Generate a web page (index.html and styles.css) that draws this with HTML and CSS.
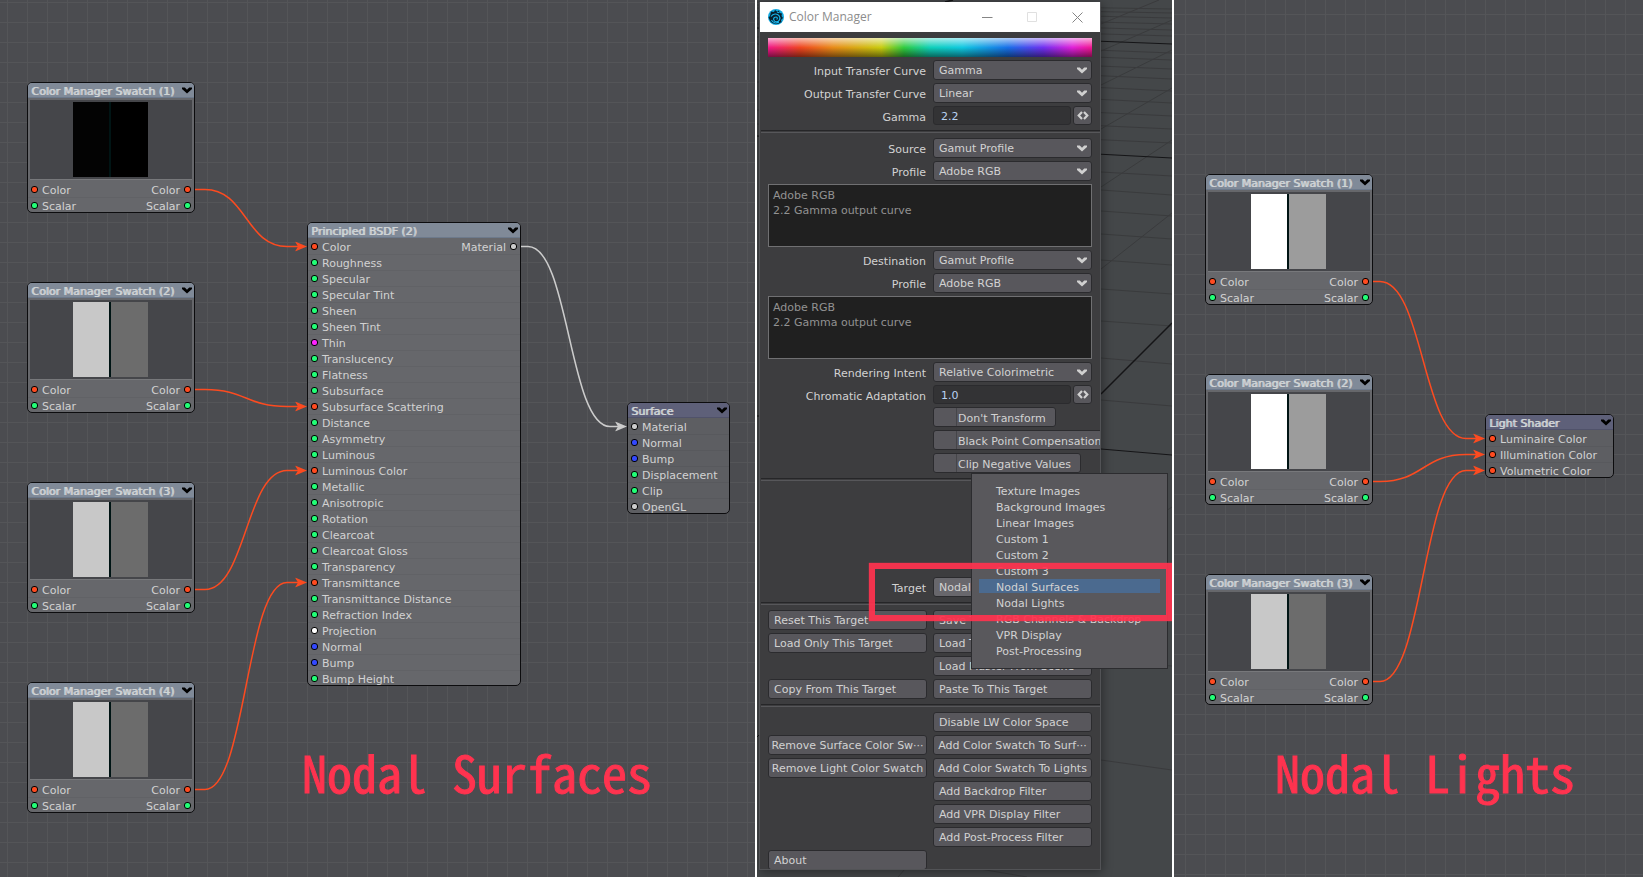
FILE: index.html
```
<!DOCTYPE html>
<html lang="en">
<head>
    <meta charset="UTF-8">
    <meta name="viewport" content="width=device-width, initial-scale=1.0">
    <title>Color Manager</title>
    <link rel="stylesheet" href="styles.css">
</head>
<body>

    <!-- Shared icons -->
    <svg class="defs" aria-hidden="true">
        <symbol id="chevron" viewBox="0 0 10 7">
            <path d="M0 0.5h2.8L5 2.7 7.200 0.5H10V2L5 6.500 0 2z"/>
        </symbol>
        <symbol id="spin" viewBox="0 0 12 9">
            <path d="M5 1L1.700 4.500 5 8M7 1l3.300 3.500L7 8" fill="none" stroke="currentColor" stroke-width="2.2"/>
        </symbol>
        <symbol id="arrow" viewBox="0 0 12 10">
            <path d="M0 0L12 5 0 10 3 5z"/>
        </symbol>
    </svg>

    <main class="boards">

        <section class="board board-surfaces">
            <svg class="wires">
                <g class="wire">
                    <path d="M195 189.500H205C246 189.500 246 246.500 287 246.500H300"/>
                    <path d="M195 389.500H205C246 389.500 246 406.500 287 406.500H300"/>
                    <path d="M195 589.500H205C246 589.500 246 470.500 287 470.500H300"/>
                    <path d="M195 789.500H205C246 789.500 246 582.500 287 582.500H300"/>
                </g>
                <g class="wire-head">
                    <use href="#arrow" x="295" y="241.500" width="12" height="10"/>
                    <use href="#arrow" x="295" y="401.500" width="12" height="10"/>
                    <use href="#arrow" x="295" y="465.500" width="12" height="10"/>
                    <use href="#arrow" x="295" y="577.500" width="12" height="10"/>
                </g>
                <path class="wire wire-material" d="M521 246.500H528C569 246.500 569 426.500 610 426.500H620"/>
                <use class="wire-head-material" href="#arrow" x="615" y="421.500" width="12" height="10"/>
            </svg>

            <article class="node swatch s1">
                <h2>Color Manager Swatch (1)</h2><svg class="fold"><use href="#chevron"/></svg>
                <div class="preview dark"><i></i><b></b></div>
                <ul>
                    <li><span class="port red"></span>Color<span class="out">Color<span class="port red"></span></span></li>
                    <li><span class="port green"></span>Scalar<span class="out">Scalar<span class="port green"></span></span></li>
                </ul>
            </article>

            <article class="node swatch s2">
                <h2>Color Manager Swatch (2)</h2><svg class="fold"><use href="#chevron"/></svg>
                <div class="preview"><i></i><b></b></div>
                <ul>
                    <li><span class="port red"></span>Color<span class="out">Color<span class="port red"></span></span></li>
                    <li><span class="port green"></span>Scalar<span class="out">Scalar<span class="port green"></span></span></li>
                </ul>
            </article>

            <article class="node swatch s3">
                <h2>Color Manager Swatch (3)</h2><svg class="fold"><use href="#chevron"/></svg>
                <div class="preview"><i></i><b></b></div>
                <ul>
                    <li><span class="port red"></span>Color<span class="out">Color<span class="port red"></span></span></li>
                    <li><span class="port green"></span>Scalar<span class="out">Scalar<span class="port green"></span></span></li>
                </ul>
            </article>

            <article class="node swatch s4">
                <h2>Color Manager Swatch (4)</h2><svg class="fold"><use href="#chevron"/></svg>
                <div class="preview"><i></i><b></b></div>
                <ul>
                    <li><span class="port red"></span>Color<span class="out">Color<span class="port red"></span></span></li>
                    <li><span class="port green"></span>Scalar<span class="out">Scalar<span class="port green"></span></span></li>
                </ul>
            </article>

            <article class="node bsdf">
                <h2>Principled BSDF (2)</h2><svg class="fold"><use href="#chevron"/></svg>
                <ul>
                    <li><span class="port red"></span>Color<span class="out">Material<span class="port gray"></span></span></li>
                    <li><span class="port green"></span>Roughness</li>
                    <li><span class="port green"></span>Specular</li>
                    <li><span class="port green"></span>Specular Tint</li>
                    <li><span class="port green"></span>Sheen</li>
                    <li><span class="port green"></span>Sheen Tint</li>
                    <li><span class="port magenta"></span>Thin</li>
                    <li><span class="port green"></span>Translucency</li>
                    <li><span class="port green"></span>Flatness</li>
                    <li><span class="port green"></span>Subsurface</li>
                    <li><span class="port red"></span>Subsurface Scattering</li>
                    <li><span class="port green"></span>Distance</li>
                    <li><span class="port green"></span>Asymmetry</li>
                    <li><span class="port green"></span>Luminous</li>
                    <li><span class="port red"></span>Luminous Color</li>
                    <li><span class="port green"></span>Metallic</li>
                    <li><span class="port green"></span>Anisotropic</li>
                    <li><span class="port green"></span>Rotation</li>
                    <li><span class="port green"></span>Clearcoat</li>
                    <li><span class="port green"></span>Clearcoat Gloss</li>
                    <li><span class="port green"></span>Transparency</li>
                    <li><span class="port red"></span>Transmittance</li>
                    <li><span class="port green"></span>Transmittance Distance</li>
                    <li><span class="port green"></span>Refraction Index</li>
                    <li><span class="port white"></span>Projection</li>
                    <li><span class="port blue"></span>Normal</li>
                    <li><span class="port blue"></span>Bump</li>
                    <li><span class="port green"></span>Bump Height</li>
                </ul>
            </article>

            <article class="node root surface">
                <h2>Surface</h2><svg class="fold"><use href="#chevron"/></svg>
                <ul>
                    <li><span class="port gray"></span>Material</li>
                    <li><span class="port blue"></span>Normal</li>
                    <li><span class="port blue"></span>Bump</li>
                    <li><span class="port green"></span>Displacement</li>
                    <li><span class="port green"></span>Clip</li>
                    <li><span class="port gray"></span>OpenGL</li>
                </ul>
            </article>

            <h1 class="caption">Nodal Surfaces</h1>
        </section>

        <section class="viewport">
            <!-- Perspective floor grid -->
            <svg class="floor">
                <g class="floor-minor">
                    <path d="M0 2L415 9M0 5L415 13M0 8L415 18M0 13L415 24M0 18L415 30M0 24L415 36M0 37L415 53M0 44L415 60M0 52L415 69M0 60L415 79M0 71L415 91M0 82L415 103M0 96L415 116M0 110L415 129M0 124L415 143"/>
                    <path d="M344 172L415 176M344 190L415 195M344 211L415 216M344 234L415 239M344 260L415 265M344 289L415 294M344 321L415 326M344 358L415 364M344 400L415 406M344 660L415 666M344 760L415 770"/>
                    <path d="M344 24L402 0M344 51L415 20M344 85L415 50M344 129L415 88M344 187L415 140M344 269L415 213M344 554L415 507M141 877L148 869M223 869L270 877"/>
                </g>
                <path class="floor-major" d="M0 28L415 44M0 136L415 158M344 449L415 455M0 416L3 416M0 737L3 734"/>
                <path class="floor-axis" d="M344 394L415 323M188 2L196 0"/>
            </svg>

            <section class="window">
                <header class="titlebar">
                    <svg class="logo" viewBox="0 0 16 16">
                        <circle cx="8" cy="8" r="8" fill="#12a8e0"/>
                        <path d="M3 2.500l3 .5 1-2 2 1.500 2-1 .5 2.500 2.500.5-.5 2.500 1.500 2-2 2 .5 2-2.500 1.500C8 16 3 14.500 2 11.500L.5 8.500 2 7z" fill="#07202e"/>
                        <path d="M3 7.500c2-3 6-3.500 8-.8s.3 6-2.500 6-4-3.500-1.500-4.500 3 1.800 1.500 2M3.500 11c1 2.500 5 4 7.500 2M9 3l2 .8" fill="none" stroke="#19b4ec" stroke-width="1.100"/>
                    </svg>
                    <span class="title">Color Manager</span>
                    <button class="win-btn" aria-label="Minimize"><svg viewBox="0 0 11 11"><path d="M0 5.500h10.500"/></svg></button>
                    <button class="win-btn" aria-label="Maximize" disabled><svg viewBox="0 0 11 11"><path d="M.5.5h9v9h-9z"/></svg></button>
                    <button class="win-btn" aria-label="Close"><svg viewBox="0 0 11 11"><path d="M.5.5l10 10M10.500.5l-10 10"/></svg></button>
                </header>

                <form class="panel">
                    <div class="spectrum"></div>

                    <label for="input-curve">Input Transfer Curve</label>
                    <div class="drop"><select id="input-curve"><option>Gamma</option></select><svg><use href="#chevron"/></svg></div>
                    <label for="output-curve">Output Transfer Curve</label>
                    <div class="drop"><select id="output-curve"><option>Linear</option></select><svg><use href="#chevron"/></svg></div>
                    <label for="gamma">Gamma</label>
                    <div class="number"><input id="gamma" type="text" value="2.2"><button type="button" aria-label="Adjust gamma"><svg><use href="#spin"/></svg></button></div>

                    <hr>

                    <label for="source">Source</label>
                    <div class="drop"><select id="source"><option>Gamut Profile</option></select><svg><use href="#chevron"/></svg></div>
                    <label for="source-profile">Profile</label>
                    <div class="drop"><select id="source-profile"><option>Adobe RGB</option></select><svg><use href="#chevron"/></svg></div>
                    <textarea readonly aria-label="Source profile info">Adobe RGB
2.2 Gamma output curve</textarea>

                    <label for="destination">Destination</label>
                    <div class="drop"><select id="destination"><option>Gamut Profile</option></select><svg><use href="#chevron"/></svg></div>
                    <label for="destination-profile">Profile</label>
                    <div class="drop"><select id="destination-profile"><option>Adobe RGB</option></select><svg><use href="#chevron"/></svg></div>
                    <textarea readonly aria-label="Destination profile info">Adobe RGB
2.2 Gamma output curve</textarea>

                    <label for="intent">Rendering Intent</label>
                    <div class="drop"><select id="intent"><option>Relative Colorimetric</option></select><svg><use href="#chevron"/></svg></div>
                    <label for="adaptation">Chromatic Adaptation</label>
                    <div class="number"><input id="adaptation" type="text" value="1.0"><button type="button" aria-label="Adjust adaptation"><svg><use href="#spin"/></svg></button></div>

                    <label class="check"><input type="checkbox">Don't Transform</label>
                    <label class="check"><input type="checkbox">Black Point Compensation</label>
                    <label class="check"><input type="checkbox">Clip Negative Values</label>

                    <hr>

                    <div class="spacer"></div>
                    <label for="target">Target</label>
                    <div class="drop open"><select id="target"><option>Nodal Surfaces</option></select><svg><use href="#chevron"/></svg></div>

                    <hr>

                    <button type="button">Reset This Target</button>
                    <button type="button">Save This Target</button>
                    <button type="button">Load Only This Target</button>
                    <button type="button">Load This Target</button>
                    <button type="button" class="right">Load Master From Scene</button>
                    <button type="button">Copy From This Target</button>
                    <button type="button">Paste To This Target</button>

                    <hr>

                    <button type="button" class="right">Disable LW Color Space</button>
                    <button type="button" class="tight">Remove Surface Color Sw···</button>
                    <button type="button" class="tight">Add Color Swatch To Surf···</button>
                    <button type="button" class="tight">Remove Light Color Swatch</button>
                    <button type="button" class="tight">Add Color Swatch To Lights</button>
                    <button type="button" class="right">Add Backdrop Filter</button>
                    <button type="button" class="right">Add VPR Display Filter</button>
                    <button type="button" class="right">Add Post-Process Filter</button>
                    <button type="button">About</button>
                </form>
            </section>

            <!-- Target menu -->
            <ul class="menu">
                <li><button>Texture Images</button></li>
                <li><button>Background Images</button></li>
                <li><button>Linear Images</button></li>
                <li><button>Custom 1</button></li>
                <li><button>Custom 2</button></li>
                <li><button>Custom 3</button></li>
                <li><button class="active">Nodal Surfaces</button></li>
                <li><button>Nodal Lights</button></li>
                <li><button>RGB Channels &amp; Backdrop</button></li>
                <li><button>VPR Display</button></li>
                <li><button>Post-Processing</button></li>
            </ul>
            <div class="marker"></div>
        </section>

        <section class="board board-lights">
            <svg class="wires">
                <g class="wire">
                    <path d="M199 281.500H206C249 281.500 249 438.500 292 438.500H304"/>
                    <path d="M199 481.500H206C249 481.500 249 454.500 292 454.500H304"/>
                    <path d="M199 681.500H206C249 681.500 249 470.500 292 470.500H304"/>
                </g>
                <g class="wire-head">
                    <use href="#arrow" x="299" y="433.500" width="12" height="10"/>
                    <use href="#arrow" x="299" y="449.500" width="12" height="10"/>
                    <use href="#arrow" x="299" y="465.500" width="12" height="10"/>
                </g>
            </svg>

            <article class="node swatch l1">
                <h2>Color Manager Swatch (1)</h2><svg class="fold"><use href="#chevron"/></svg>
                <div class="preview light"><i></i><b></b></div>
                <ul>
                    <li><span class="port red"></span>Color<span class="out">Color<span class="port red"></span></span></li>
                    <li><span class="port green"></span>Scalar<span class="out">Scalar<span class="port green"></span></span></li>
                </ul>
            </article>

            <article class="node swatch l2">
                <h2>Color Manager Swatch (2)</h2><svg class="fold"><use href="#chevron"/></svg>
                <div class="preview light"><i></i><b></b></div>
                <ul>
                    <li><span class="port red"></span>Color<span class="out">Color<span class="port red"></span></span></li>
                    <li><span class="port green"></span>Scalar<span class="out">Scalar<span class="port green"></span></span></li>
                </ul>
            </article>

            <article class="node swatch l3">
                <h2>Color Manager Swatch (3)</h2><svg class="fold"><use href="#chevron"/></svg>
                <div class="preview"><i></i><b></b></div>
                <ul>
                    <li><span class="port red"></span>Color<span class="out">Color<span class="port red"></span></span></li>
                    <li><span class="port green"></span>Scalar<span class="out">Scalar<span class="port green"></span></span></li>
                </ul>
            </article>

            <article class="node root shader">
                <h2>Light Shader</h2><svg class="fold"><use href="#chevron"/></svg>
                <ul>
                    <li><span class="port red"></span>Luminaire Color</li>
                    <li><span class="port red"></span>Illumination Color</li>
                    <li><span class="port red"></span>Volumetric Color</li>
                </ul>
            </article>

            <h1 class="caption">Nodal Lights</h1>
        </section>

    </main>
</body>
</html>
```
FILE: styles.css
```
* {
    box-sizing: border-box;
}

body {
    margin: 0;
    font-family: "DejaVu Sans", Verdana, sans-serif;
    font-size: 11px;
    line-height: 16px;
    color: #d2d2d2;
    background: #4b4c50;
}

button, input, select, textarea {
    font: inherit;
    color: inherit;
    margin: 0;
}

ul {
    list-style: none;
    margin: 0;
    padding: 0;
}

.defs {
    position: absolute;
    width: 0;
    height: 0;
}

/* Three views side by side */
.boards {
    display: grid;
    grid-template-columns: 755fr 419px 469fr;
    min-height: 100vh;
}

.board {
    position: relative;
    overflow: hidden;
    background-color: #4b4c50;
    background-image: linear-gradient(90deg, #545558 1px, transparent 1px), linear-gradient(#545558 1px, transparent 1px);
    background-size: 20px 20px;
}

.board-surfaces {
    background-position: 7px 2px;
}

.board-lights {
    background-position: 11px 14px;
}

/* Wires */
.wires {
    position: absolute;
    top: 0;
    left: 0;
    width: 100%;
    height: 100%;
}

.wire {
    fill: none;
    stroke: #fc4b20;
    stroke-width: 1.5;
}

.wire-head {
    fill: #fc4b20;
}

.wire-material {
    stroke: #cccccc;
}

.wire-head-material {
    fill: #cccccc;
}

/* Nodes */
.node {
    position: absolute;
    overflow: hidden;
    background: #66676b;
    border: 1px solid #0c0c0e;
    border-radius: 5px;
}

.node h2 {
    margin: 0;
    height: 15px;
    padding-left: 3px;
    overflow: hidden;
    font-size: 11px;
    font-weight: normal;
    line-height: 18px;
    color: #d0d4d6;
    text-shadow: 1px 0 #d0d4d6;
    background: #808a98;
    border-bottom: 1px solid #6d7a8c;
}

.node .fold {
    position: absolute;
    top: 4px;
    right: 2px;
    width: 10px;
    height: 7px;
    fill: #000;
}

.node ul {
    padding-top: 1px;
    margin-bottom: -2px;
}

.node li {
    display: flex;
    gap: 4px;
    height: 16px;
    padding: 0 3px;
    line-height: 18px;
    border-bottom: 1px solid #616266;
}

.out {
    display: flex;
    gap: 4px;
    margin-left: auto;
}

.port {
    width: 7px;
    height: 7px;
    margin-top: 4px;
    border: 1px solid #000;
    border-radius: 3px;
}

.red { background: #ff4b20; }
.green { background: #22ff77; }
.blue { background: #3348ff; }
.magenta { background: #ff22ff; }
.white { background: #fff; }
.gray { background: #ccc; }

.preview {
    display: flex;
    justify-content: center;
    height: 80px;
    margin: 2px 2px 1px;
    padding: 2px 1px 0 0;
    background: #45464a;
    border-bottom: 1px solid #77787b;
}

.preview i, .preview b {
    height: 75px;
}

.preview i {
    width: 38px;
    background: #c8c8c8;
    border-right: 2px solid #001414;
}

.preview b {
    width: 37px;
    background: #6c6c6c;
}

.preview.light i { background: #fff; }
.preview.light b { background: #9c9c9c; }
.preview.dark i { background: #030303; }
.preview.dark b { background: #000; }

.root {
    background: #5d5e62;
}

.root h2 {
    background: #5e6079;
    border-color: #50526a;
}

.root li {
    border-color: #58595d;
}

/* Node positions on the canvases */
.swatch { width: 168px; }
.s1 { left: 27px; top: 82px; }
.s2 { left: 27px; top: 282px; }
.s3 { left: 27px; top: 482px; }
.s4 { left: 27px; top: 682px; }
.bsdf { left: 307px; top: 222px; width: 214px; }
.surface { left: 627px; top: 402px; width: 103px; }
.l1 { left: 31px; top: 174px; }
.l2 { left: 31px; top: 374px; }
.l3 { left: 31px; top: 574px; }
.shader { left: 311px; top: 414px; width: 129px; }

.caption {
    position: absolute;
    top: 741px;
    left: 302px;
    margin: 0;
    font-family: "Noto Sans CJK JP", monospace;
    font-feature-settings: "hwid";
    font-size: 50px;
    font-weight: 400;
    line-height: 60px;
    white-space: nowrap;
    color: #ff334f;
    -webkit-text-stroke: 1px #ff334f;
}

.board-lights .caption {
    left: 101px;
}

/* Middle view */
.viewport {
    position: relative;
    overflow: hidden;
    background: #444749;
    border: solid #fff;
    border-width: 0 2px;
}

.floor {
    position: absolute;
    width: 100%;
    height: 100%;
    fill: none;
}

.floor-minor { stroke: #3a3b3d; }
.floor-major { stroke: #151517; }
.floor-axis { stroke: #151517; stroke-width: 1.5; }

.window {
    position: absolute;
    top: 2px;
    left: 2px;
    width: 342px;
    overflow: hidden;
    background: #3d3d3f;
    border: 1px solid #525356;
    border-top: 0;
    box-shadow: 1px 2px 10px rgba(0, 0, 0, 0.4);
}

.titlebar {
    display: flex;
    align-items: center;
    height: 30px;
    padding-left: 8px;
    background: #fff;
}

.logo {
    width: 16px;
    height: 16px;
    margin-right: 5px;
}

.title {
    margin-right: auto;
    font-family: "Open Sans", sans-serif;
    font-size: 12px;
    color: #8c8c8c;
}

.win-btn {
    display: grid;
    place-items: center;
    width: 45px;
    height: 30px;
    padding: 0;
    border: 0;
    background: none;
}

.win-btn svg {
    width: 11px;
    height: 11px;
    fill: none;
    stroke: #858585;
    overflow: visible;
}

.win-btn:disabled svg {
    stroke: #e0e0e0;
}

.panel {
    display: grid;
    grid-template-columns: minmax(0, 1fr) minmax(0, 1fr);
    gap: 3px 6px;
    padding: 6px 8px 0;
    margin-bottom: -1px;
}

.spectrum {
    grid-column: 1 / -1;
    height: 19px;
    background:
        linear-gradient(rgba(255, 255, 255, 0.65), rgba(255, 255, 255, 0) 50%, rgba(0, 0, 0, 0) 50%, rgba(0, 0, 0, 0.5)),
        linear-gradient(90deg, #f01888 0%, #ef4520 10%, #e88a18 20%, #c8cc10 35%, #30cc40 42%, #10d0b8 50%, #10c8e0 60%, #1870e8 74%, #7030f0 85%, #e020d8 94%, #f01890 100%);
}

.panel label {
    text-align: right;
    padding: 2px 1px 0 0;
    line-height: 20px;
    height: 20px;
}

.panel hr {
    grid-column: 1 / -1;
    width: auto;
    height: 3px;
    margin: 2px -8px 2px -7px;
    border: 0;
    border-top: 1px solid #262628;
    border-bottom: 1px solid #57575a;
}

.panel button, .drop select {
    width: 100%;
    height: 20px;
    padding: 2px 5px 0;
    text-align: left;
    line-height: 16px;
    white-space: nowrap;
    overflow: hidden;
    background: #58575c;
    border: 1px solid #2b2b2e;
    border-radius: 3px;
}

.panel .right {
    grid-column: 2;
}

.panel .tight {
    padding: 2px 0 0;
    text-align: center;
}

.drop {
    position: relative;
}

.drop select {
    display: block;
    appearance: none;
}

.drop svg {
    position: absolute;
    top: 7px;
    right: 5px;
    width: 10px;
    height: 7px;
    fill: #d0d0d0;
    pointer-events: none;
}

.drop.open select {
    background: #68676c;
}

.number {
    display: flex;
    gap: 2px;
    height: 19px;
}

.panel .number input {
    flex: 1;
    min-width: 0;
    height: 19px;
    padding: 2px 7px 0;
    color: #b9d2f2;
    background: #333335;
    border: 1px solid #2b2b2e;
    border-radius: 3px;
}

.panel .number button {
    width: 19px;
    height: 19px;
    padding: 0;
    text-align: center;
}

.number svg {
    display: block;
    width: 12px;
    height: 9px;
    margin: 0 auto;
}

.panel label:has(+ .number) {
    height: 19px;
}

.panel textarea {
    grid-column: 1 / -1;
    display: block;
    height: 63px;
    padding: 3px 4px;
    line-height: 15px;
    resize: none;
    color: #929292;
    background: #202020;
    border: 1px solid #707072;
    outline: 0;
}

.panel .check {
    grid-column: 2;
    justify-self: start;
    display: flex;
    padding: 0 9px 0 0;
    line-height: 21px;
    white-space: nowrap;
    background: #58575c;
    border: 1px solid #2b2b2e;
    border-radius: 3px;
}

.check input {
    flex: none;
    appearance: none;
    width: 23px;
    height: 18px;
    margin-right: 1px;
    border-right: 1px solid #454549;
}

.spacer {
    grid-column: 1 / -1;
    height: 88px;
}

/* Open drop-down menu */
.menu {
    position: absolute;
    top: 473px;
    left: 214px;
    width: 197px;
    padding: 9px 7px;
    background: #59585c;
    border: 1px solid #2c2c2f;
}

.menu li {
    height: 16px;
}

.menu button {
    display: block;
    width: 100%;
    height: 14px;
    padding: 2px 17px 0;
    text-align: left;
    line-height: 14px;
    white-space: nowrap;
    background: none;
    border: 0;
}

.menu .active {
    background: #4b6a8f;
}

.marker {
    position: absolute;
    top: 563px;
    left: 112px;
    right: 0;
    height: 58px;
    border: 6px solid rgba(255, 51, 79, 0.93);
    box-shadow: 0 0 1px #f8324d;
    pointer-events: none;
}
```
